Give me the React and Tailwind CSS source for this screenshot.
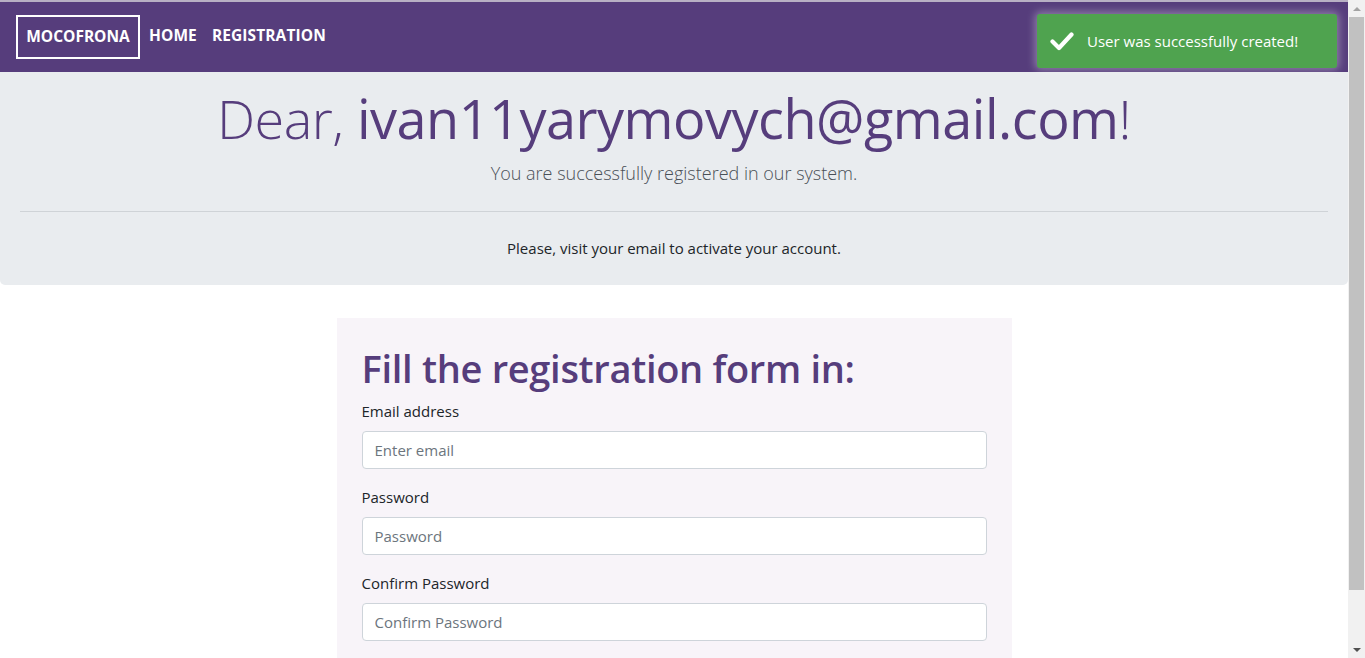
import React from "react";

function Check() {
  return (
    <svg width="24" height="20" viewBox="0 0 24 20" className="shrink-0">
      <path d="M2.5 10.5 L9 17 L21.5 3.5" fill="none" stroke="white" strokeWidth="4.2" strokeLinecap="round" strokeLinejoin="round" />
    </svg>
  );
}

function Field({ label, placeholder }) {
  return (
    <div className="mb-4">
      <label className="block text-[15px] text-[#212529] mb-2 leading-[24px]">{label}</label>
      <input
        className="w-full h-[38px] bg-white border border-[#ced4da] rounded-[4px] px-3 text-[15px] placeholder:text-[#6c757d] outline-none"
        placeholder={placeholder}
      />
    </div>
  );
}

export default function App() {
  return (
    <div className="h-[658px] w-[1365px] overflow-hidden flex bg-white" style={{ fontFamily: '"Open Sans", "Noto Sans", sans-serif' }}>
      <div className="flex-1 flex flex-col min-w-0">
        <div className="h-[2px] shrink-0 bg-[#b8b0c4]" />
        <nav className="relative shrink-0 h-[70px] bg-[#563d7c] flex items-start pl-4 pr-4">
          <div className="border-2 border-white h-[44px] w-[124px] mt-[13px] flex items-center justify-center text-white font-bold text-[15.5px]">MOCOFRONA</div>
          <div className="flex gap-[15px] ml-[9px] mt-[22px] text-white font-bold text-[15.5px] tracking-[0.1px]">
            <span>HOME</span>
            <span>REGISTRATION</span>
          </div>
          <div className="absolute right-[11px] top-[12px] w-[300px] h-[54px] bg-[#4fa34f] rounded-[3px] flex items-center pl-[13px] gap-[13px] text-white text-[15px] shadow-[0_0_8px_2px_rgba(255,255,255,0.35)]">
            <Check />
            <span>User was successfully created!</span>
          </div>
        </nav>
        <section className="shrink-0 bg-[#e9ecef] rounded-b-[5px] h-[213px] px-5 flex flex-col items-center">
          <h1 className="mt-[10px] text-[54px] leading-[72px] text-[#563d7c] tracking-[-0.5px] whitespace-nowrap">
            <span className="font-light">Dear, </span>
            <span className="font-normal">ivan11yarymovych@gmail.com</span>
            <span className="font-light">!</span>
          </h1>
          <p className="mt-[6px] text-[18px] font-light text-[#495057] leading-[26px]">You are successfully registered in our system.</p>
          <div className="w-full h-px bg-[#cfd3d7] mt-[25px]" />
          <p className="mt-[25px] text-[15px] text-[#212529] leading-[22px]">Please, visit your email to activate your account.</p>
        </section>
        <div className="shrink-0 flex justify-center pt-[33px]">
          <div className="w-[675px] bg-[#f8f4f9] px-[25px] pt-[23px] h-[400px]">
            <h2 className="text-[38px] font-semibold text-[#563d7c] leading-[54px] tracking-[-0.3px] mb-[4px]">Fill the registration form in:</h2>
            <Field label="Email address" placeholder="Enter email" />
            <Field label="Password" placeholder="Password" />
            <Field label="Confirm Password" placeholder="Confirm Password" />
          </div>
        </div>
      </div>
      <div className="w-[17px] shrink-0 h-full bg-[#f1f1f1] flex flex-col items-center">
        <div className="h-[17px] shrink-0 flex items-center justify-center">
          <div className="w-0 h-0 border-l-[4px] border-r-[4px] border-b-[4px] border-l-transparent border-r-transparent border-b-[#a3a3a3]" />
        </div>
        <div className="w-[15px] h-[573px] shrink-0 bg-[#c1c1c1]" />
        <div className="flex-1" />
        <div className="h-[17px] shrink-0 flex items-center justify-center">
          <div className="w-0 h-0 border-l-[4px] border-r-[4px] border-t-[4px] border-l-transparent border-r-transparent border-t-[#505050]" />
        </div>
      </div>
    </div>
  );
}
